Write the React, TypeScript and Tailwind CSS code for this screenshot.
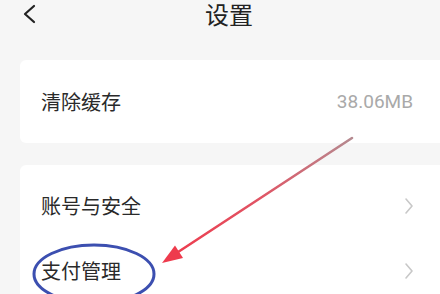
import React from "react";

const Chevron = () => (
  <svg width="10" height="18" viewBox="0 0 10 18" fill="none">
    <path d="M2 2 L8 9 L2 16" stroke="#c8c8c8" strokeWidth="1.6" strokeLinecap="round" strokeLinejoin="round" />
  </svg>
);

export default function App() {
  return (
    <div
      className="relative w-[440px] h-[294px] overflow-hidden bg-[#f6f6f6] text-[#2a2a2a]"
      style={{ fontFamily: '"Noto Sans CJK SC", "Noto Sans", sans-serif' }}
    >
      <div className="flex items-start h-[60px] pt-[1px]">
        <svg className="ml-[21px] mt-[2px]" width="16" height="22" viewBox="0 0 16 22" fill="none">
          <path d="M13 3 L4 11 L13 19" stroke="#222" strokeWidth="2.2" strokeLinecap="round" strokeLinejoin="round" />
        </svg>
        <div className="ml-[168px] text-[24px] leading-[24px] pt-[1px] text-[#222]">设置</div>
      </div>

      <div className="ml-[20px] bg-white rounded-l-[6px] h-[83px] flex items-center justify-between pl-[21px] pr-[27px]">
        <span className="text-[20px] leading-[24px]">清除缓存</span>
        <span className="text-[19px] leading-[24px] text-[#a9a9a9]" style={{ fontFamily: '"Roboto", "Noto Sans", sans-serif' }}>
          38.06MB
        </span>
      </div>

      <div className="ml-[20px] mt-[22px] bg-white rounded-l-[6px] pt-[8px]">
        <div className="h-[65px] flex items-center justify-between pl-[21px] pr-[26px]">
          <span className="text-[20px] leading-[24px]">账号与安全</span>
          <Chevron />
        </div>
        <div className="h-[65px] flex items-center justify-between pl-[21px] pr-[26px]">
          <span className="text-[20px] leading-[24px]">支付管理</span>
          <Chevron />
        </div>
      </div>

      <svg className="absolute left-0 top-0 pointer-events-none" width="440" height="294" viewBox="0 0 440 294">
        <defs>
          <linearGradient id="ln" x1="352" y1="138" x2="170" y2="257" gradientUnits="userSpaceOnUse">
            <stop offset="0" stopColor="#b58a90" />
            <stop offset="0.5" stopColor="#e05565" />
            <stop offset="1" stopColor="#ee3b4d" />
          </linearGradient>
        </defs>
        <path d="M352 138 L172 256" stroke="url(#ln)" strokeWidth="2.6" strokeLinecap="round" />
        <polygon points="162,263 175,245.5 183,258" fill="#ee3b4d" />
        <ellipse cx="94" cy="274" rx="60" ry="29" fill="none" stroke="#3c4fb0" strokeWidth="3" />
      </svg>
    </div>
  );
}
